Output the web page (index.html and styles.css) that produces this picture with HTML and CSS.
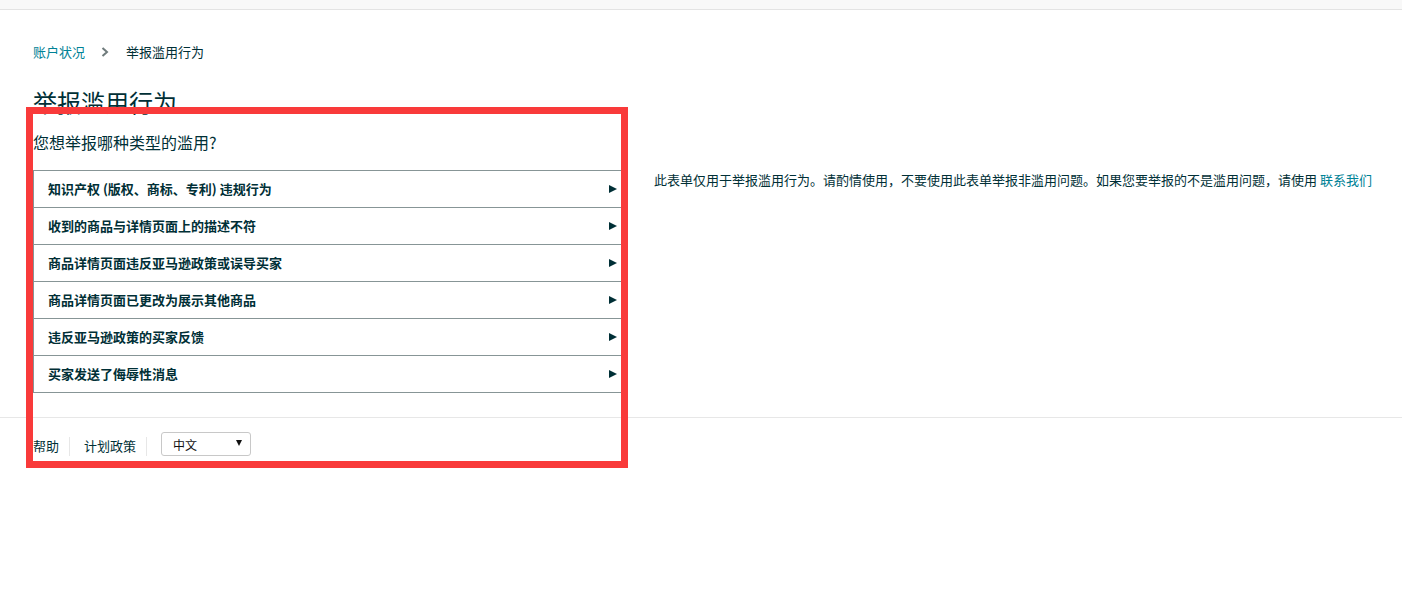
FILE: index.html
```html
<!DOCTYPE html>
<html lang="zh-CN">
<head>
<meta charset="utf-8">
<title>举报滥用行为</title>
<link rel="stylesheet" href="styles.css">
</head>
<body>
<div class="topbar"></div>
<main class="main">
  <nav class="crumbs">
    <a href="#">账户状况</a>
    <svg class="chev" width="8" height="10" viewBox="0 0 8 10"><polyline points="1.5,1 6,5 1.5,9" fill="none" stroke="#6f7b7c" stroke-width="2"/></svg>
    <span>举报滥用行为</span>
  </nav>
  <h1 class="title">举报滥用行为</h1>
  <p class="question">您想举报哪种类型的滥用?</p>
  <div class="layout">
    <ul class="list">
      <li class="row"><span>知识产权 (版权、商标、专利) 违规行为</span><i class="tri"></i></li>
      <li class="row"><span>收到的商品与详情页面上的描述不符</span><i class="tri"></i></li>
      <li class="row"><span>商品详情页面违反亚马逊政策或误导买家</span><i class="tri"></i></li>
      <li class="row"><span>商品详情页面已更改为展示其他商品</span><i class="tri"></i></li>
      <li class="row"><span>违反亚马逊政策的买家反馈</span><i class="tri"></i></li>
      <li class="row"><span>买家发送了侮辱性消息</span><i class="tri"></i></li>
    </ul>
    <p class="info">此表单仅用于举报滥用行为。请酌情使用，不要使用此表单举报非滥用问题。如果您要举报的不是滥用问题，请使用 <a href="#">联系我们</a></p>
  </div>
</main>
<footer class="footer">
  <a class="flink" href="#">帮助</a>
  <a class="flink" href="#">计划政策</a>
  <div class="select"><span>中文</span><i class="sel-arrow"></i></div>
</footer>
<div class="highlight"></div>
</body>
</html>
```
FILE: styles.css
```css
* { box-sizing: border-box; }
body {
  margin: 0;
  font-family: "Noto Sans CJK SC", "Liberation Sans", sans-serif;
  color: #002f36;
  background: #fff;
}
.topbar {
  height: 10px;
  background: #f8f8f8;
  border-bottom: 1px solid #e3e3e3;
}
.main {
  padding: 32px 0 24px 33px;
}
.crumbs {
  display: flex;
  align-items: center;
  font-size: 13px;
  line-height: 20px;
}
.crumbs a {
  color: #008296;
  text-decoration: none;
}
.chev {
  margin: 0 17px 0 16px;
}
.title {
  margin: 25px 0 0;
  font-size: 24px;
  font-weight: 400;
  line-height: 30px;
}
.question {
  margin: 14px 0 0;
  font-size: 16px;
  line-height: 22px;
}
.layout {
  display: flex;
  align-items: flex-start;
  gap: 32px;
  margin-top: 17px;
}
.list {
  list-style: none;
  margin: 0;
  padding: 0;
  width: 589px;
  flex: none;
  border-left: 1px solid #879596;
  border-right: 1px solid #879596;
  border-bottom: 1px solid #879596;
}
.row {
  display: flex;
  align-items: center;
  justify-content: space-between;
  height: 37px;
  border-top: 1px solid #879596;
  padding: 0 4px 2px 14px;
  font-size: 13px;
  font-weight: 700;
}
.tri {
  width: 0;
  height: 0;
  margin-top: 2px;
  border-left: 8px solid #002f36;
  border-top: 4px solid transparent;
  border-bottom: 4px solid transparent;
}
.info {
  margin: 0;
  flex: 1;
  font-size: 13px;
  line-height: 20px;
  white-space: nowrap;
}
.info a {
  color: #008296;
  text-decoration: none;
}
.footer {
  display: flex;
  align-items: flex-end;
  border-top: 1px solid #e7e7e7;
  padding: 14px 33px;
  font-size: 13px;
}
.flink {
  color: #002f36;
  text-decoration: none;
  line-height: 18px;
  padding-bottom: 1px;
  padding-right: 10px;
  margin-right: 14px;
  border-right: 1px solid #e7e7e7;
}
.select {
  display: flex;
  align-items: center;
  justify-content: space-between;
  width: 90px;
  height: 24px;
  padding: 1px 8px 0 11px;
  border: 1px solid #c8c8c8;
  border-radius: 3px;
  font-size: 12px;
  color: #111;
}
.sel-arrow {
  width: 0;
  height: 0;
  margin-top: -3px;
  border-top: 6px solid #111;
  border-left: 3px solid transparent;
  border-right: 3px solid transparent;
}
.highlight {
  position: absolute;
  left: 26px;
  top: 107px;
  width: 602px;
  height: 361px;
  border: 7px solid #f93a3a;
  pointer-events: none;
}
```
